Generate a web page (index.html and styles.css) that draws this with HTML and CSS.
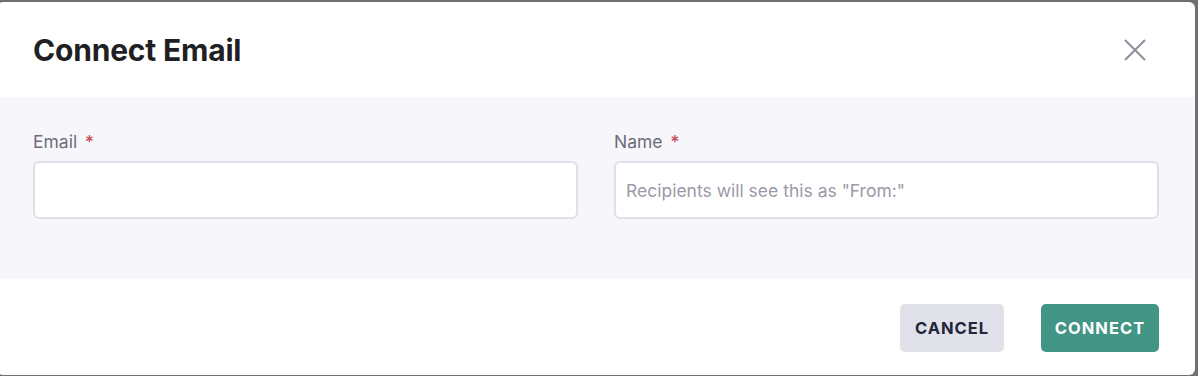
FILE: index.html
```html
<!DOCTYPE html>
<html lang="en">
<head>
<meta charset="utf-8">
<title>Connect Email</title>
<link rel="stylesheet" href="styles.css">
</head>
<body>
<div class="dialog">
  <header class="dialog-header">
    <h1 class="dialog-title">Connect Email</h1>
    <button class="close-btn" aria-label="Close">
      <svg width="22" height="22" viewBox="0 0 22 22"><path d="M1 1 L21 21 M21 1 L1 21" stroke="#8e8e9b" stroke-width="2" fill="none"/></svg>
    </button>
  </header>
  <section class="dialog-body">
    <div class="field">
      <label class="field-label">Email <span class="req">*</span></label>
      <input class="field-input" type="text">
    </div>
    <div class="field">
      <label class="field-label">Name <span class="req">*</span></label>
      <input class="field-input" type="text" placeholder="Recipients will see this as &quot;From:&quot;">
    </div>
  </section>
  <footer class="dialog-footer">
    <button class="btn btn-cancel">Cancel</button>
    <button class="btn btn-primary">Connect</button>
  </footer>
</div>
</body>
</html>
```
FILE: styles.css
```css
* { box-sizing: border-box; }
html, body { margin: 0; padding: 0; }
body {
  background: #707070;
  width: 1198px;
  height: 376px;
  overflow: hidden;
  font-family: Inter, "Liberation Sans", sans-serif;
}
.dialog {
  margin: 2px 0 0 -3px;
  width: 1198px;
  height: 373px;
  background: #fff;
  border-radius: 6px;
  overflow: hidden;
  display: flex;
  flex-direction: column;
}
.dialog-header {
  height: 95px;
  padding: 0 49px 0 36px;
  display: flex;
  align-items: center;
  justify-content: space-between;
}
.dialog-title {
  margin: 0;
  font-size: 30px;
  font-weight: 700;
  color: #1f1f24;
  letter-spacing: -0.2px;
  line-height: 36px;
}
.close-btn {
  border: 0;
  background: none;
  padding: 0;
  width: 22px;
  height: 22px;
  display: flex;
}
.dialog-body {
  background: #f7f7fb;
  height: 182px;
  padding: 35px 36px 0;
  display: grid;
  grid-template-columns: 1fr 1fr;
  column-gap: 36px;
  align-items: start;
}
.field { display: flex; flex-direction: column; }
.field-label {
  font-size: 17.5px;
  color: #6c6c7c;
  line-height: 20px;
  margin-bottom: 9px;
}
.req { color: #c8404e; margin-left: 3px; }
.field-input {
  height: 58px;
  border: 2px solid #e0dfe8;
  border-radius: 6px;
  background: #fff;
  padding: 0 10px;
  font-family: Inter, "Liberation Sans", sans-serif;
  font-size: 17.5px;
  color: #1f1f24;
  outline: none;
}
.field-input::placeholder { color: #9b9aa8; }
.dialog-footer {
  flex: 1;
  display: flex;
  align-items: center;
  justify-content: flex-end;
  gap: 37px;
  padding: 2px 36px 0 0;
}
.btn {
  height: 48px;
  border: 0;
  border-radius: 5px;
  font-family: Inter, "Liberation Sans", sans-serif;
  font-size: 16.5px;
  font-weight: 700;
  letter-spacing: 1px;
  text-transform: uppercase;
  padding: 0;
}
.btn-cancel { background: #e1e1ea; color: #24243a; width: 104px; }
.btn-primary { background: #429585; color: #fff; width: 118px; }
```
